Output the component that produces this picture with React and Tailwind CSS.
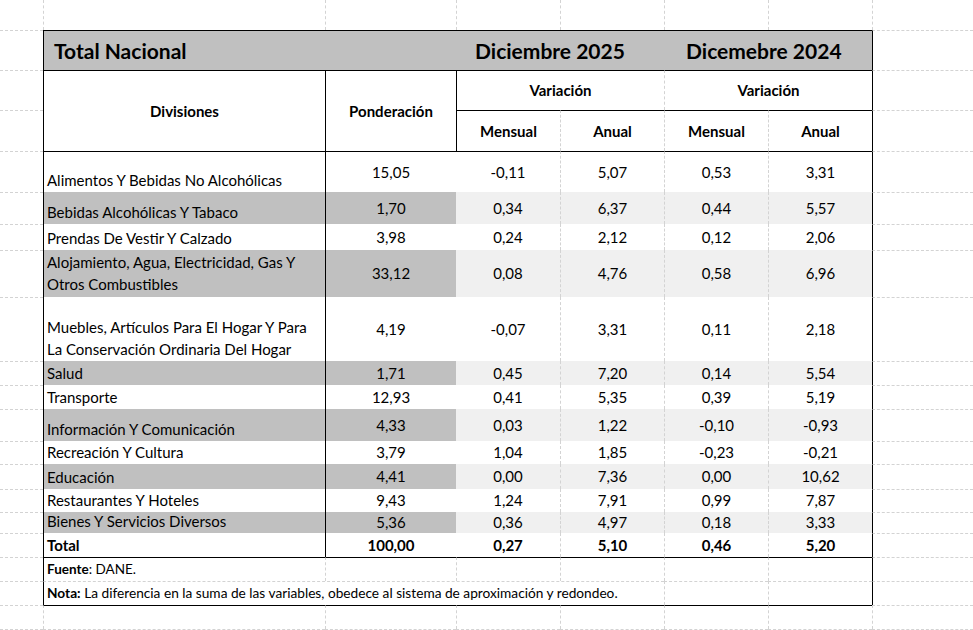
// Tabla IPC — variación por divisiones, vista tipo hoja de cálculo.

const L = {
  n: '',
  g: 'border-l border-l-[#d3d3d3] [border-left-style:dashed]',
  k: 'border-l border-l-black',
}
const T = {
  n: '',
  g: 'border-t border-t-[#d3d3d3] [border-top-style:dashed]',
  k: 'border-t border-t-black',
}

function C({ l = 'n', t = 'n', className = '', children }) {
  return <div className={`min-w-0 ${L[l]} ${T[t]} ${className}`}>{children}</div>
}

const ROWS = [
  { label: ['Alimentos Y Bebidas No Alcohólicas'], p: '15,05', v: ['-0,11', '5,07', '0,53', '3,31'] },
  { label: ['Bebidas Alcohólicas Y Tabaco'], p: '1,70', v: ['0,34', '6,37', '0,44', '5,57'], shade: true },
  { label: ['Prendas De Vestir Y Calzado'], p: '3,98', v: ['0,24', '2,12', '0,12', '2,06'] },
  {
    label: ['Alojamiento, Agua, Electricidad, Gas Y', 'Otros Combustibles'],
    p: '33,12',
    v: ['0,08', '4,76', '0,58', '6,96'],
    shade: true,
    middle: true,
  },
  {
    label: ['Muebles, Artículos Para El Hogar Y Para', 'La Conservación Ordinaria Del Hogar'],
    p: '4,19',
    v: ['-0,07', '3,31', '0,11', '2,18'],
  },
  { label: ['Salud'], p: '1,71', v: ['0,45', '7,20', '0,14', '5,54'], shade: true },
  { label: ['Transporte'], p: '12,93', v: ['0,41', '5,35', '0,39', '5,19'] },
  { label: ['Información Y Comunicación'], p: '4,33', v: ['0,03', '1,22', '-0,10', '-0,93'], shade: true },
  { label: ['Recreación Y Cultura'], p: '3,79', v: ['1,04', '1,85', '-0,23', '-0,21'] },
  { label: ['Educación'], p: '4,41', v: ['0,00', '7,36', '0,00', '10,62'], shade: true },
  { label: ['Restaurantes Y Hoteles'], p: '9,43', v: ['1,24', '7,91', '0,99', '7,87'] },
  { label: ['Bienes Y Servicios Diversos'], p: '5,36', v: ['0,36', '4,97', '0,18', '3,33'], shade: true },
]

function DataRow({ row, first }) {
  const t = first ? 'k' : 'n'
  const dark = row.shade ? 'bg-[#c0c0c0]' : 'bg-white'
  const light = row.shade ? 'bg-[#f0f0f0]' : 'bg-white'
  return (
    <>
      <C t="g" />
      <C
        l="k"
        t={t}
        className={`flex flex-col px-[3px] pb-[1px] leading-[22px] ${row.middle ? 'justify-center' : 'justify-end'} ${dark}`}
      >
        {row.label.map((s) => (
          <span key={s} className="whitespace-nowrap">
            {s}
          </span>
        ))}
      </C>
      <C l="k" t={t} className={`flex items-center justify-center ${dark}`}>
        {row.p}
      </C>
      {row.v.map((n, i) => (
        <C key={i} l={i === 0 ? 'n' : 'g'} t={t} className={`flex items-center justify-center ${light}`}>
          {n}
        </C>
      ))}
      <C l="k" t="g" />
    </>
  )
}

export default function App() {
  return (
    <div className="grid h-[630px] w-[973px] grid-cols-[43px_282px_131px_104px_104px_104px_104px_101px] grid-rows-[30px_40px_40px_41px_41px_32px_26px_47px_64px_24px_24px_32px_23px_25px_23px_21px_24px_24px_24px_24px_1px] overflow-hidden bg-white font-[Lato,sans-serif] text-[15px] text-black">
      {/* fila vacía superior */}
      <C />
      <C l="g" />
      <C l="g" />
      <C l="g" />
      <C l="g" />
      <C l="g" />
      <C l="g" />
      <C l="g" />

      {/* título */}
      <C t="g" />
      <C
        l="k"
        t="k"
        className="col-span-6 grid grid-cols-[413px_208px_208px] items-center bg-[#c0c0c0] text-[21px] font-bold"
      >
        <span className="pl-[10px]">Total Nacional</span>
        <span className="pl-[18px]">Diciembre 2025</span>
        <span className="pl-[21px]">Dicemebre 2024</span>
      </C>
      <C l="k" t="g" />

      {/* encabezados */}
      <C t="g" />
      <C l="k" t="k" className="row-span-2 flex items-center justify-center font-bold">
        Divisiones
      </C>
      <C l="k" t="k" className="row-span-2 flex items-center justify-center font-bold">
        Ponderación
      </C>
      <C l="k" t="k" className="col-span-2 flex items-center justify-center font-bold">
        Variación
      </C>
      <C l="g" t="k" className="col-span-2 flex items-center justify-center font-bold">
        Variación
      </C>
      <C l="k" t="g" />

      <C t="g" />
      <C l="k" t="k" className="flex items-center justify-center font-bold">
        Mensual
      </C>
      <C l="g" t="k" className="flex items-center justify-center font-bold">
        Anual
      </C>
      <C l="g" t="k" className="flex items-center justify-center font-bold">
        Mensual
      </C>
      <C l="g" t="k" className="flex items-center justify-center font-bold">
        Anual
      </C>
      <C l="k" t="g" />

      {ROWS.map((row, i) => (
        <DataRow key={i} row={row} first={i === 0} />
      ))}

      {/* total */}
      <C t="g" />
      <C l="k" className="flex items-end px-[3px] pb-[1px] font-bold">
        Total
      </C>
      <C l="k" className="flex items-center justify-center font-bold">
        100,00
      </C>
      <C className="flex items-center justify-center font-bold">0,27</C>
      <C l="g" className="flex items-center justify-center font-bold">
        5,10
      </C>
      <C l="g" className="flex items-center justify-center font-bold">
        0,46
      </C>
      <C l="g" className="flex items-center justify-center font-bold">
        5,20
      </C>
      <C l="k" t="g" />

      {/* fuente */}
      <C t="g" />
      <C l="k" t="k" className="flex items-center px-[3px] text-[13.5px]">
        <span>
          <b>Fuente</b>: DANE.
        </span>
      </C>
      <C l="g" t="k" />
      <C l="g" t="k" />
      <C l="g" t="k" />
      <C l="g" t="k" />
      <C l="g" t="k" />
      <C l="k" t="g" />

      {/* nota */}
      <C t="g" />
      <C l="k" t="g" className="col-span-4 flex items-center px-[3px] text-[13.7px]">
        <span className="whitespace-nowrap">
          <b>Nota:</b> La diferencia en la suma de las variables, obedece al sistema de aproximación y redondeo.
        </span>
      </C>
      <C l="g" t="g" />
      <C l="g" t="g" />
      <C l="k" t="g" />

      {/* filas bajo la tabla */}
      <C t="g" />
      <C l="g" t="k" />
      <C l="g" t="k" />
      <C l="g" t="k" />
      <C l="g" t="k" />
      <C l="g" t="k" />
      <C l="g" t="k" />
      <C l="g" t="g" />

      <C t="g" />
      <C l="g" t="g" />
      <C l="g" t="g" />
      <C l="g" t="g" />
      <C l="g" t="g" />
      <C l="g" t="g" />
      <C l="g" t="g" />
      <C l="g" t="g" />
    </div>
  )
}
